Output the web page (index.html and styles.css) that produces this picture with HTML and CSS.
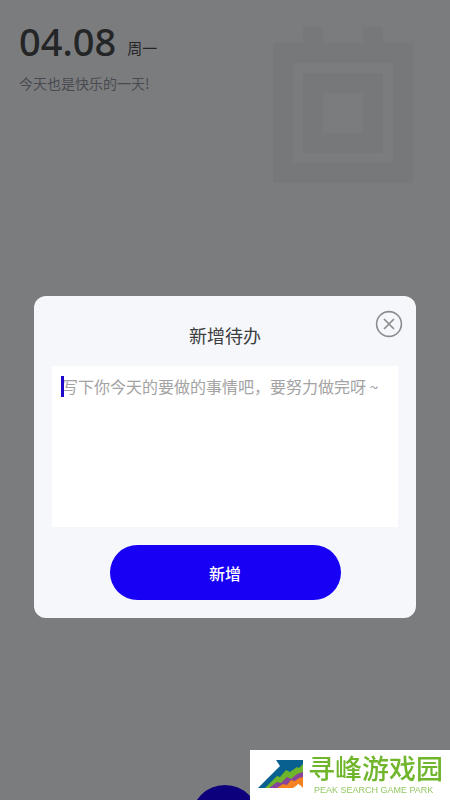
FILE: index.html
```html
<!DOCTYPE html>
<html lang="zh-CN">
<head>
<meta charset="utf-8">
<meta name="viewport" content="width=device-width, initial-scale=1">
<title>新增待办</title>
<link rel="stylesheet" href="styles.css">
</head>
<body>
<main class="page">
  <header class="header">
    <div class="intro">
      <h1 class="date">04.08 <span class="weekday">周一</span></h1>
      <p class="greeting">今天也是快乐的一天!</p>
    </div>
    <svg class="calendar" viewBox="0 0 140 156" aria-hidden="true">
      <path fill="#777879" fill-rule="evenodd" d="M0 16H30V0H50V16H90V0H110V16H140V156H0ZM20 36V136H120V36Z"/>
      <path fill="#777879" fill-rule="evenodd" d="M30 46H110V126H30ZM50 66V106H90V66Z"/>
    </svg>
  </header>
</main>
<button class="add" type="button" aria-label="添加"></button>
<form class="dialog" role="dialog" aria-labelledby="dialog-title">
  <button class="close" type="button" aria-label="关闭">
    <svg viewBox="0 0 28 28" fill="none" stroke="#8b8c8e">
      <circle cx="14" cy="14" r="12.4" stroke-width="1.6"/>
      <path stroke-width="1.7" d="M9 9 19 19M19 9 9 19"/>
    </svg>
  </button>
  <h2 class="title" id="dialog-title"><label for="todo">新增待办</label></h2>
  <div class="field">
    <textarea class="input" id="todo" placeholder="写下你今天的要做的事情吧，要努力做完呀 ~"></textarea>
    <span class="caret"></span>
  </div>
  <button class="submit" type="button">新增</button>
</form>
<aside class="brand">
  <svg class="logo" viewBox="0 0 46 30" aria-hidden="true">
    <path fill="#07608f" d="M18 1H45V29H0L22 7Z"/>
    <path fill="#6fb52c" d="M7 29 19 17 22 18 28 11 32 13 39 8 41 9 45 5V29Z"/>
    <path fill="#86449a" d="M11 29 19 23 23 24 29 18 33 20 39 15 45 13V29Z"/>
    <path fill="#f58220" d="M19 29 25 25 29 26 33 21 37 22 41 19 45 18V29Z"/>
    <path fill="#fff" d="M35 29 38 27 40 25 42 26 45 29V30H35Z"/>
  </svg>
  <div class="brand-text">
    <strong class="brand-name">寻峰游戏园</strong>
    <span class="brand-sub">PEAK SEARCH GAME PARK</span>
  </div>
</aside>
</body>
</html>
```
FILE: styles.css
```css
* {
  box-sizing: border-box;
}

body {
  margin: 0;
  min-height: 100vh;
  overflow: hidden;
  background: #7b7c7e;
  color: #242526;
  font-family: "Noto Sans CJK SC", sans-serif;
}

button {
  padding: 0;
  border: 0;
  cursor: pointer;
}

h1,
h2,
p {
  margin: 0;
}

.header {
  display: flex;
  justify-content: space-between;
  padding: 19px 37px 0 19px;
}

.date {
  display: flex;
  align-items: center;
  gap: 11px;
  font: 500 38px/44px "Noto Sans", sans-serif;
}

.weekday {
  padding-top: 14px;
  font: 400 15px/20px "Noto Sans CJK SC", sans-serif;
}

.greeting {
  margin-top: 10px;
  color: #494a50;
  font-size: 14px;
  line-height: 20px;
}

.calendar {
  width: 140px;
  height: 156px;
  margin-top: 8px;
}

.dialog {
  position: fixed;
  top: 296px;
  left: 34px;
  right: 34px;
  display: flex;
  flex-direction: column;
  align-items: center;
  padding: 25px 18px 18px;
  border-radius: 12px;
  background: #f5f7fa;
}

.close {
  position: absolute;
  top: 14px;
  right: 13px;
  width: 28px;
  height: 28px;
  background: none;
}

.close svg {
  display: block;
}

.title {
  color: #3c3d3f;
  font-size: 18px;
  font-weight: 400;
  line-height: 28px;
}

.field {
  position: relative;
  width: 100%;
  margin-top: 17px;
}

.input {
  display: block;
  width: 100%;
  height: 161px;
  padding: 8px 0 8px 10px;
  border: 0;
  outline: 0;
  resize: none;
  background: #fff;
  color: #333;
  font: 400 16px/24px "Noto Sans CJK SC", sans-serif;
}

.input::placeholder {
  color: #a3a3a3;
}

.caret {
  position: absolute;
  top: 10px;
  left: 9px;
  width: 3px;
  height: 21px;
  background: #1b08c8;
}

.submit {
  width: 231px;
  height: 55px;
  margin-top: 18px;
  border-radius: 28px;
  background: #1800f5;
  color: #fff;
  font: 500 16px/24px "Noto Sans CJK SC", sans-serif;
}

.add {
  position: fixed;
  bottom: -53px;
  left: calc(50% - 34px);
  width: 68px;
  height: 68px;
  border-radius: 50%;
  background: #0d007d;
}

.brand {
  position: fixed;
  right: 0;
  bottom: 0;
  display: flex;
  gap: 4px;
  width: 200px;
  height: 50px;
  padding: 2px 0 0 8px;
  background: #fff;
  color: #70b62c;
}

.logo {
  flex: none;
  width: 46px;
  height: 30px;
  margin-top: 7px;
}

.brand-text {
  display: flex;
  flex-direction: column;
  white-space: nowrap;
}

.brand-name {
  font-size: 27px;
  font-weight: 500;
  line-height: 32px;
}

.brand-sub {
  padding-left: 6px;
  color: #94c864;
  font: 400 9px/12px "Liberation Sans", sans-serif;
}
```
